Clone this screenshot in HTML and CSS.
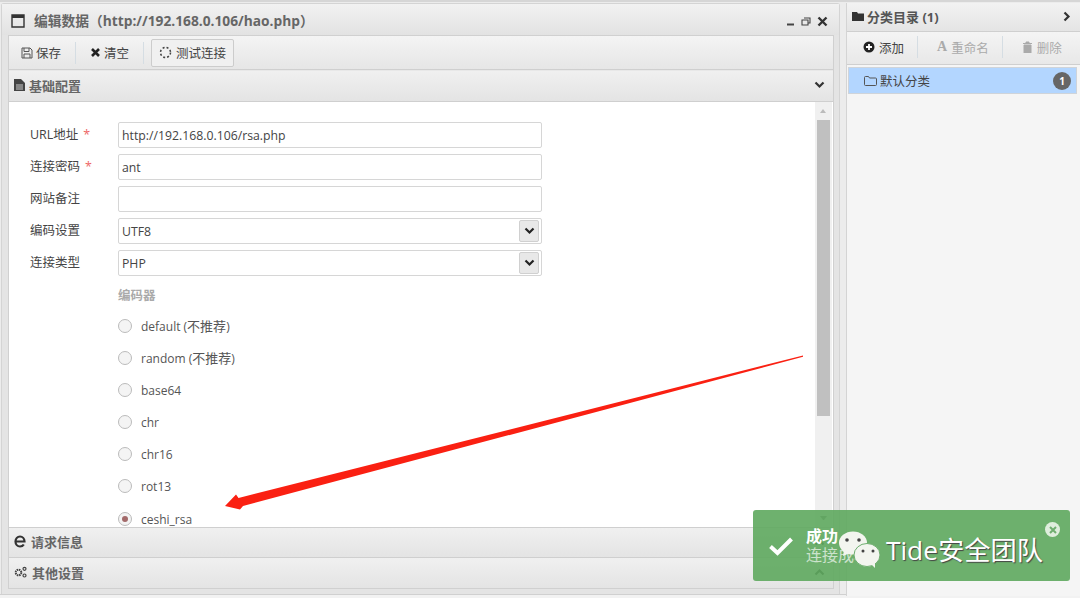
FILE: index.html
```html
<!DOCTYPE html>
<html lang="zh">
<head>
<meta charset="utf-8">
<title>编辑数据</title>
<link rel="stylesheet" href="styles.css">
</head>
<body>
<div class="app">
  <section class="win">
    <header class="win-title">
      <svg class="ic-win" viewBox="0 0 14 14"><path d="M1 1h12v12H1z" fill="none" stroke="#333" stroke-width="1.4"/><path d="M1 1h12v3H1z" fill="#333"/></svg>
      <span class="win-title-text">编辑数据（http://192.168.0.106/hao.php）</span>
      <span class="win-ctrls">
        <svg width="9" height="9" viewBox="0 0 9 9"><path d="M1 6.500h7V8.500H1z" fill="#444"/></svg>
        <svg width="10" height="9" viewBox="0 0 10 9"><path d="M3 1h6v5H7M1 3h6v5H1z" fill="none" stroke="#444" stroke-width="1.100"/></svg>
        <svg width="11" height="11" viewBox="0 0 11 11"><path d="M1.500 1.500l8 8M9.500 1.500l-8 8" stroke="#333" stroke-width="2.400"/></svg>
      </span>
    </header>
    <div class="win-body">
      <div class="toolbar">
        <button class="tb-btn"><svg width="12" height="12" viewBox="0 0 12 12"><path d="M1 1h8l2 2v8H1z M3 1v3.500h5V1 M3 11V7h6v4" fill="none" stroke="#555" stroke-width="1"/></svg>保存</button>
        <i class="sep"></i>
        <button class="tb-btn"><svg width="11" height="11" viewBox="0 0 11 11"><path d="M2 2l7 7M9 2l-7 7" stroke="#222" stroke-width="2.600"/></svg>清空</button>
        <i class="sep"></i>
        <button class="tb-btn tb-active"><svg width="13" height="13" viewBox="0 0 13 13"><circle cx="6.500" cy="6.500" r="5" fill="none" stroke="#444" stroke-width="1.500" stroke-dasharray="2 2"/></svg>测试连接</button>
      </div>
      <div class="acc-head acc-first">
        <svg width="11" height="12" viewBox="0 0 11 12"><path d="M0 0h7l4 4v8H0z" fill="#444"/><path d="M2 6h7M2 8h7M2 10h7" stroke="#eee" stroke-width=".8"/></svg>
        <b>基础配置</b>
        <svg class="chev" width="11" height="8" viewBox="0 0 11 8"><path d="M1.500 1.500l4 4 4-4" fill="none" stroke="#333" stroke-width="2.200"/></svg>
      </div>
      <div class="content">
        <div class="form">
          <div class="row"><label>URL地址<em>*</em></label><input class="field" value="http://192.168.0.106/rsa.php"></div>
          <div class="row"><label>连接密码<em>*</em></label><input class="field" value="ant"></div>
          <div class="row"><label>网站备注</label><input class="field"></div>
          <div class="row"><label>编码设置</label><div class="field select">UTF8<span class="sel-btn"><svg width="11" height="8" viewBox="0 0 11 8"><path d="M1.500 1.500l4 4 4-4" fill="none" stroke="#222" stroke-width="2.200"/></svg></span></div></div>
          <div class="row"><label>连接类型</label><div class="field select">PHP<span class="sel-btn"><svg width="11" height="8" viewBox="0 0 11 8"><path d="M1.500 1.500l4 4 4-4" fill="none" stroke="#222" stroke-width="2.200"/></svg></span></div></div>
          <div class="group-label">编码器</div>
          <div class="radio"><i></i><span>default (<span class="cjk">不推荐</span>)</span></div>
          <div class="radio"><i></i><span>random (<span class="cjk">不推荐</span>)</span></div>
          <div class="radio"><i></i>base64</div>
          <div class="radio"><i></i>chr</div>
          <div class="radio"><i></i>chr16</div>
          <div class="radio"><i></i>rot13</div>
          <div class="radio on"><i></i>ceshi_rsa</div>
        </div>
        <div class="scrollbar">
          <span class="arrow-up"></span>
          <span class="thumb"></span>
          <span class="arrow-down"></span>
        </div>
      </div>
      <div class="acc-head">
        <svg width="12" height="13" viewBox="0 0 12 13"><path d="M1.500 6.500h9c0-3-2-5-4.500-5s-4.500 2-4.500 5 2 5 4.500 5c1.600 0 3-.7 3.800-2" fill="none" stroke="#333" stroke-width="2.200"/></svg>
        <b>请求信息</b>
        <svg class="chev" width="11" height="8" viewBox="0 0 11 8"><path d="M1.500 6.500l4-4 4 4" fill="none" stroke="#333" stroke-width="2.200"/></svg>
      </div>
      <div class="acc-head acc-last">
        <svg width="13" height="12" viewBox="0 0 13 12"><circle cx="4.500" cy="6.500" r="2.800" fill="none" stroke="#444" stroke-width="2" stroke-dasharray="1.500 .7"/><circle cx="10.500" cy="2.800" r="1.500" fill="none" stroke="#444" stroke-width="1.200"/><circle cx="10.500" cy="9.500" r="1.500" fill="none" stroke="#444" stroke-width="1.200"/></svg>
        <b>其他设置</b>
        <svg class="chev" width="11" height="8" viewBox="0 0 11 8"><path d="M1.500 6.500l4-4 4 4" fill="none" stroke="#333" stroke-width="2.200"/></svg>
      </div>
    </div>
  </section>

  <aside class="side">
    <header class="side-title">
      <svg width="12" height="10" viewBox="0 0 12 10"><path d="M0 1h5l1 1.500h6V10H0z" fill="#333"/></svg>
      <b>分类目录 (1)</b>
      <svg class="side-chev" width="8" height="11" viewBox="0 0 8 11"><path d="M1.500 1.500l4 4-4 4" fill="none" stroke="#333" stroke-width="2.200"/></svg>
    </header>
    <div class="side-tools">
      <button class="tb-btn side-btn"><svg width="12" height="12" viewBox="0 0 12 12"><circle cx="6" cy="6" r="5.500" fill="#222"/><path d="M6 3v6M3 6h6" stroke="#fff" stroke-width="1.800"/></svg>添加</button>
      <i class="sep"></i>
      <button class="tb-btn side-btn off"><span class="big-a">A</span>重命名</button>
      <i class="sep"></i>
      <button class="tb-btn side-btn off"><svg width="11" height="12" viewBox="0 0 11 12"><path d="M1 2.500h9M4 2.500V1h3v1.500M2 4h7v8H2z" fill="#aaa" stroke="#aaa"/></svg>删除</button>
    </div>
    <div class="tree">
      <div class="tree-item">
        <svg width="13" height="11" viewBox="0 0 13 11"><path d="M.5 2.500a1 1 0 0 1 1-1h3l1 1.500h6a1 1 0 0 1 1 1v5.500a1 1 0 0 1-1 1h-10a1 1 0 0 1-1-1z" fill="none" stroke="#555"/></svg>
        <span>默认分类</span>
        <span class="badge">1</span>
      </div>
    </div>
  </aside>
</div>

<svg class="annot" viewBox="0 0 1080 598" width="1080" height="598"><path d="M225 506L236 494.500 238.500 498 803 355.500 803 356.800 243 506 240 509.500z" fill="#fa2012"/></svg>

<div class="toast">
  <svg class="toast-check" width="26" height="20" viewBox="0 0 26 20"><path d="M2.500 10.500l7 6.500 14-14" fill="none" stroke="#fff" stroke-width="4"/></svg>
  <div class="toast-text"><b>成功</b><span>连接成功</span></div>
  <span class="toast-close"><svg width="8" height="8" viewBox="0 0 8 8"><path d="M1 1l6 6M7 1l-6 6" stroke="#6fae6f" stroke-width="2"/></svg></span>
</div>
<div class="watermark">
  <svg class="wx" width="44" height="38" viewBox="0 0 44 38">
    <ellipse cx="15" cy="13" rx="14" ry="11.500" fill="#f3f5ef"/>
    <path d="M6 20l-1 6 7-3z" fill="#f3f5ef"/>
    <ellipse cx="29" cy="25" rx="13" ry="11.500" fill="#f3f5ef" stroke="#6fae6f" stroke-width="1"/>
    <path d="M33 34l4 4 0-6z" fill="#f3f5ef"/>
    <circle cx="9" cy="10" r="1.800" fill="#444"/><circle cx="21" cy="10" r="1.800" fill="#444"/>
    <circle cx="25" cy="21" r="1.500" fill="#444"/><circle cx="35" cy="21" r="1.500" fill="#444"/>
  </svg>
  <span>Tide安全团队</span>
</div>
</body>
</html>
```

FILE: styles.css
```css
* { box-sizing: border-box; }
html, body { margin: 0; height: 100%; }
body {
  width: 1080px; height: 598px; overflow: hidden; position: relative;
  background: #f2f2f2; color: #333;
  font: 12.500px "Open Sans", "Noto Sans CJK SC", sans-serif;
}
.app {
  display: flex; gap: 6px; height: 595px;
  padding: 3px 0 0 1px;
  border-bottom: 1px solid #d0d0d0;
  background: linear-gradient(#d6d6d6 0 2px, #ececec 2px);
}
.win {
  width: 839px; display: flex; flex-direction: column;
  border: 1px solid #d4d4d4; border-bottom: 0; border-radius: 3px 3px 0 0;
  background: #e4e4e4;
}
.win-title {
  height: 31px; flex: none; display: flex; align-items: center;
  padding: 0 11px 0 9px;
  background: linear-gradient(#f2f2f2, #e2e2e2);
}
.ic-win { width: 14px; height: 14px; margin-right: 9px; margin-top: 2px; }
.win-title-text { font: bold 13.750px "Open Sans", "Noto Sans CJK SC", sans-serif; color: #666; }
.win-ctrls { margin-left: auto; display: flex; align-items: center; gap: 6px; margin-top: 3px; }
.win-body {
  width: 826px; margin-left: 6px; height: 554px; flex: none;
  display: flex; flex-direction: column;
  border: 1px solid #d0d0d0; background: #fff;
}
.toolbar {
  height: 34px; flex: none; display: flex; align-items: center; padding: 0 4px;
  background: linear-gradient(#f4f4f4, #e6e6e6);
  border-bottom: 1px solid #cfcfcf;
}
.tb-btn {
  height: 28px; padding: 0 6px; display: inline-flex; align-items: center; gap: 3px;
  border: 1px solid transparent; border-radius: 2px; background: none;
  font: 12.500px "Open Sans", "Noto Sans CJK SC", sans-serif; color: #444;
}
.toolbar .tb-btn { padding: 0 7px; }
.toolbar .sep { margin: 0 6px 0 6px; }
.tb-active { border-color: #ccc !important; background: #f0f0f0; margin-left: 1px; gap: 4px !important; }
.sep { width: 1px; height: 22px; background: #d5dde3; flex: none; }
.acc-head {
  height: 30px; flex: none; display: flex; align-items: center; gap: 4px; padding: 0 5px 2px 5px;
  background: linear-gradient(#f0f0f0, #e4e4e4);
  border-bottom: 1px solid #cfcfcf;
  font-size: 13px; color: #666;
}
.acc-head b { font-weight: 700; margin-left: 1px; }
.acc-first b { margin-left: 0; }
.chev { margin-left: auto; margin-right: 3px; }
.acc-first { height: 32px; border-top: 1px solid #e8e8e8; }
.acc-last { border-bottom: 0; }
.content { flex: 1; min-height: 0; display: flex; background: #fff; overflow: hidden; border-bottom: 1px solid #cfcfcf; }
.form { flex: 1; padding: 20px 0 0 20px; }
.row { display: flex; height: 26px; margin-bottom: 6px; align-items: center; }
.row label { width: 89px; flex: none; margin-top: -3px; padding-left: 1px; color: #444; }
.row em { color: #e66; font-style: normal; margin-left: 5px; }
.field {
  width: 424px; height: 26px; padding: 0 4px 0 3px; border: 1px solid #d6d6d6; border-radius: 2px;
  font: 12.250px "Open Sans", "Noto Sans CJK SC", sans-serif; color: #444; background: #fff; outline: 0;
}
.select { display: flex; align-items: center; justify-content: space-between; padding-right: 2px; }
.sel-btn { width: 20px; height: 22px; display: flex; align-items: center; justify-content: center; background: #e8e8e8; border: 1px solid #d0d0d0; border-radius: 2px; }
.group-label { margin: 9px 0 0 89px; height: 22px; color: #aaa; line-height: 22px; font-weight: 600; }
.radio { display: flex; align-items: center; height: 32px; margin-left: 89px; color: #555; font-size: 12px; }
.radio > span { margin-top: -2px; }
.radio i { width: 14px; height: 14px; border-radius: 50%; border: 1px solid #bbb; background: #f4f4f4; margin-right: 9px; flex: none; position: relative; }
.cjk { font-size: 13px; }
.group-label + .radio { margin-top: 3px; }
.radio.on { margin-top: 1px; }
.radio.on i::after { content: ""; position: absolute; left: 3px; top: 3px; width: 6px; height: 6px; border-radius: 50%; background: #a36a6a; }
.scrollbar { width: 18px; flex: none; display: flex; flex-direction: column; background: #f0f0f0; padding: 0 2px; border-right: 1px solid #fff; }
.thumb { height: 296px; background: #c0c0c0; flex: none; }
.arrow-up { height: 18px; flex: none; position: relative; }
.arrow-up::after { content: ""; position: absolute; left: 3px; top: 7px; border: 3.500px solid transparent; border-bottom: 4px solid #bbb; border-top: 0; }
.arrow-down { margin-top: auto; margin-bottom: 7px; height: 4px; width: 7px; align-self: center; flex: none; border: 3.500px solid transparent; border-top: 4px solid #888; border-bottom: 0; }
.side {
  flex: 1; display: flex; flex-direction: column; min-width: 0;
  border-left: 1px solid #d4d4d4; background: #f5f5f5; height: 593px;
}
.side-title {
  height: 29px; flex: none; display: flex; align-items: center; gap: 3px; padding: 0 9px 2px 5px;
  background: linear-gradient(#f2f2f2, #e4e4e4); border-bottom: 1px solid #cfcfcf;
  color: #555; font-size: 13px;
}
.side-chev { margin-left: auto; }
.side-tools {
  height: 33px; flex: none; display: flex; align-items: center; padding: 0 0 2px 11px;
  background: linear-gradient(#f4f4f4, #e8e8e8); border-bottom: 1px solid #cfcfcf;
}
.side-btn { padding: 0 4px 0 4px; gap: 4px; }
.side-tools .sep { margin: 0 10px 0 8px; }
.side-tools .off { padding-left: 8px; }
.off { color: #aaa; }
.big-a { font: bold 14px "Liberation Serif", serif; color: #aaa; }
.tree { padding: 2px 3px 0 1px; }
.tree-item {
  height: 27px; display: flex; align-items: center; gap: 3px; padding: 0 5px 0 15px;
  background: #b3d6ff; border: 1px solid #cfd4da; color: #444;
}
.badge { margin-left: auto; width: 18px; height: 18px; border-radius: 50%; background: #666; color: #fff; text-align: center; line-height: 18px; font-size: 10px; font-weight: 700; }
.annot { position: absolute; left: 0; top: 0; pointer-events: none; }
.toast {
  position: absolute; left: 753px; top: 510px; width: 317px; height: 71px;
  display: flex; align-items: center; padding-left: 15px;
  background: rgba(94, 168, 94, .9); border-radius: 3px; color: #fff;
}
.toast-check { flex: none; margin-right: 12px; margin-top: 1px; }
.toast-text { display: flex; flex-direction: column; font-size: 16px; line-height: 19px; }
.toast-text span { opacity: .65; }
.toast-close { position: absolute; right: 10px; top: 12px; width: 15px; height: 15px; border-radius: 50%; background: #dfeedd; display: flex; align-items: center; justify-content: center; }
.watermark { position: absolute; left: 838px; top: 529px; display: flex; align-items: center; gap: 4px; color: #fff; font: 26.300px "Open Sans", "Noto Sans CJK SC", sans-serif; text-shadow: 1px 1px 1px #444; }
.wx { flex: none; }
```
